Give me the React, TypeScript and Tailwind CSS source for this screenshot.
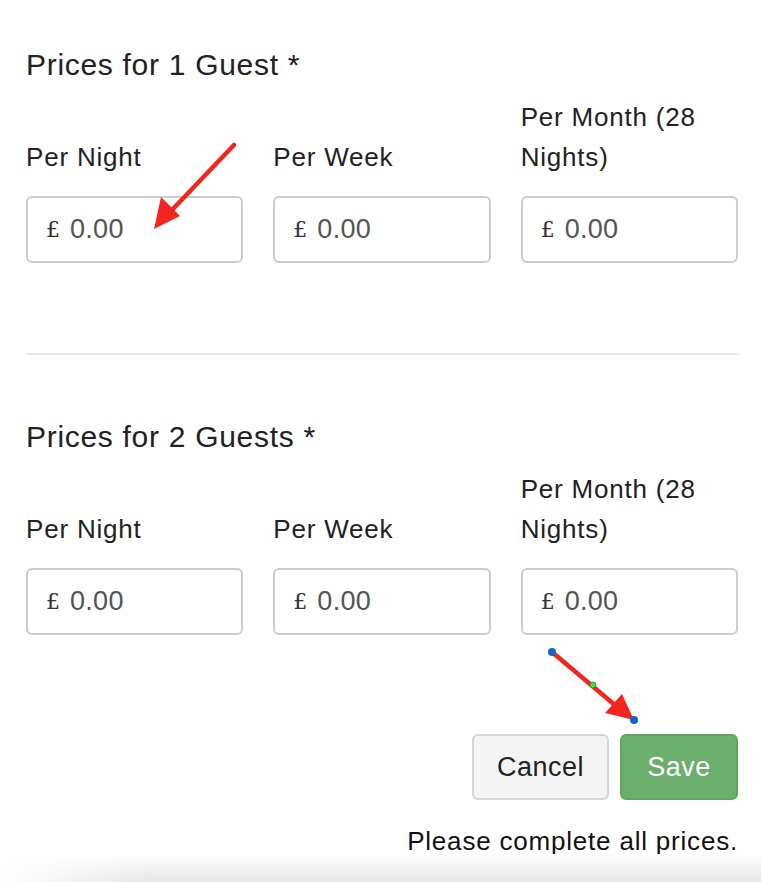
import React from "react";

const font = { fontFamily: '"Liberation Sans", Arial, Helvetica, sans-serif' };

function PriceInput() {
  return (
    <div className="flex h-[67px] items-center rounded-[6px] border-2 border-[#cccccc] bg-white pl-[18px]">
      <span className="text-[22px] text-[#333] font-['DejaVu_Serif',serif] leading-none">£</span>
      <span className="ml-[10px] text-[27px] tracking-[0.3px] text-[#555]">0.00</span>
    </div>
  );
}

function Section({ title }: { title: string }) {
  return (
    <div>
      <h2 className="h-[40px] text-[30px] leading-[40px] tracking-[0.7px] text-[#222]">{title}</h2>
      <div className="mt-[12px] grid grid-cols-3 gap-x-[30px] items-end">
        <div className="text-[26px] leading-[40px] tracking-[0.8px] text-[#222]">Per Night</div>
        <div className="text-[26px] leading-[40px] tracking-[0.8px] text-[#222]">Per Week</div>
        <div className="text-[26px] leading-[40px] tracking-[0.8px] text-[#222]">
          Per Month (28
          <br />
          Nights)
        </div>
      </div>
      <div className="mt-[19px] grid grid-cols-3 gap-x-[30px]">
        <PriceInput />
        <PriceInput />
        <PriceInput />
      </div>
    </div>
  );
}

export default function App() {
  return (
    <div className="relative h-[882px] w-[761px] overflow-hidden bg-white" style={font}>
      <div className="pl-[26px] pr-[23px] pt-[45px]">
        <Section title="Prices for 1 Guest *" />
        <div className="mt-[90px] h-[2px] bg-[#e6e6e6]" />
        <div className="mt-[62px]">
          <Section title="Prices for 2 Guests *" />
        </div>
        <div className="mt-[99px] flex justify-end gap-[11px]">
          <button className="h-[66px] w-[137px] rounded-[6px] border-2 border-[#d6d6d6] bg-[#f4f4f4] text-[27px] tracking-[0.5px] text-[#222]">
            Cancel
          </button>
          <button className="h-[66px] w-[118px] rounded-[6px] border-2 border-[#62a562] bg-[#6cae6c] text-[27px] tracking-[0.5px] text-white">
            Save
          </button>
        </div>
        <div className="mt-[21px] text-right text-[26px] leading-[40px] tracking-[0.8px] text-[#111]">
          Please complete all prices.
        </div>
      </div>
      <div className="absolute bottom-0 left-0 h-[28px] w-full bg-[linear-gradient(to_right,rgba(255,255,255,1),rgba(255,255,255,0)_20%),linear-gradient(to_bottom,#ffffff,#e6e6e6)]" />
      <svg className="pointer-events-none absolute left-0 top-0" width="761" height="882">
        <line x1="234" y1="145" x2="172" y2="210" stroke="#f2261f" strokeWidth="4.5" strokeLinecap="round" />
        <polygon points="154,229 161,197 180,216" fill="#f2261f" />
        <line x1="552" y1="652" x2="616" y2="706" stroke="#f2261f" strokeWidth="4.5" />
        <polygon points="634,720 605,713 622,694" fill="#f2261f" />
        <circle cx="552" cy="652" r="4" fill="#1565c8" />
        <circle cx="634" cy="720" r="4" fill="#1565c8" />
        <circle cx="593" cy="685" r="3" fill="#3fe03f" stroke="#2a8a2a" strokeWidth="0.8" />
      </svg>
    </div>
  );
}
